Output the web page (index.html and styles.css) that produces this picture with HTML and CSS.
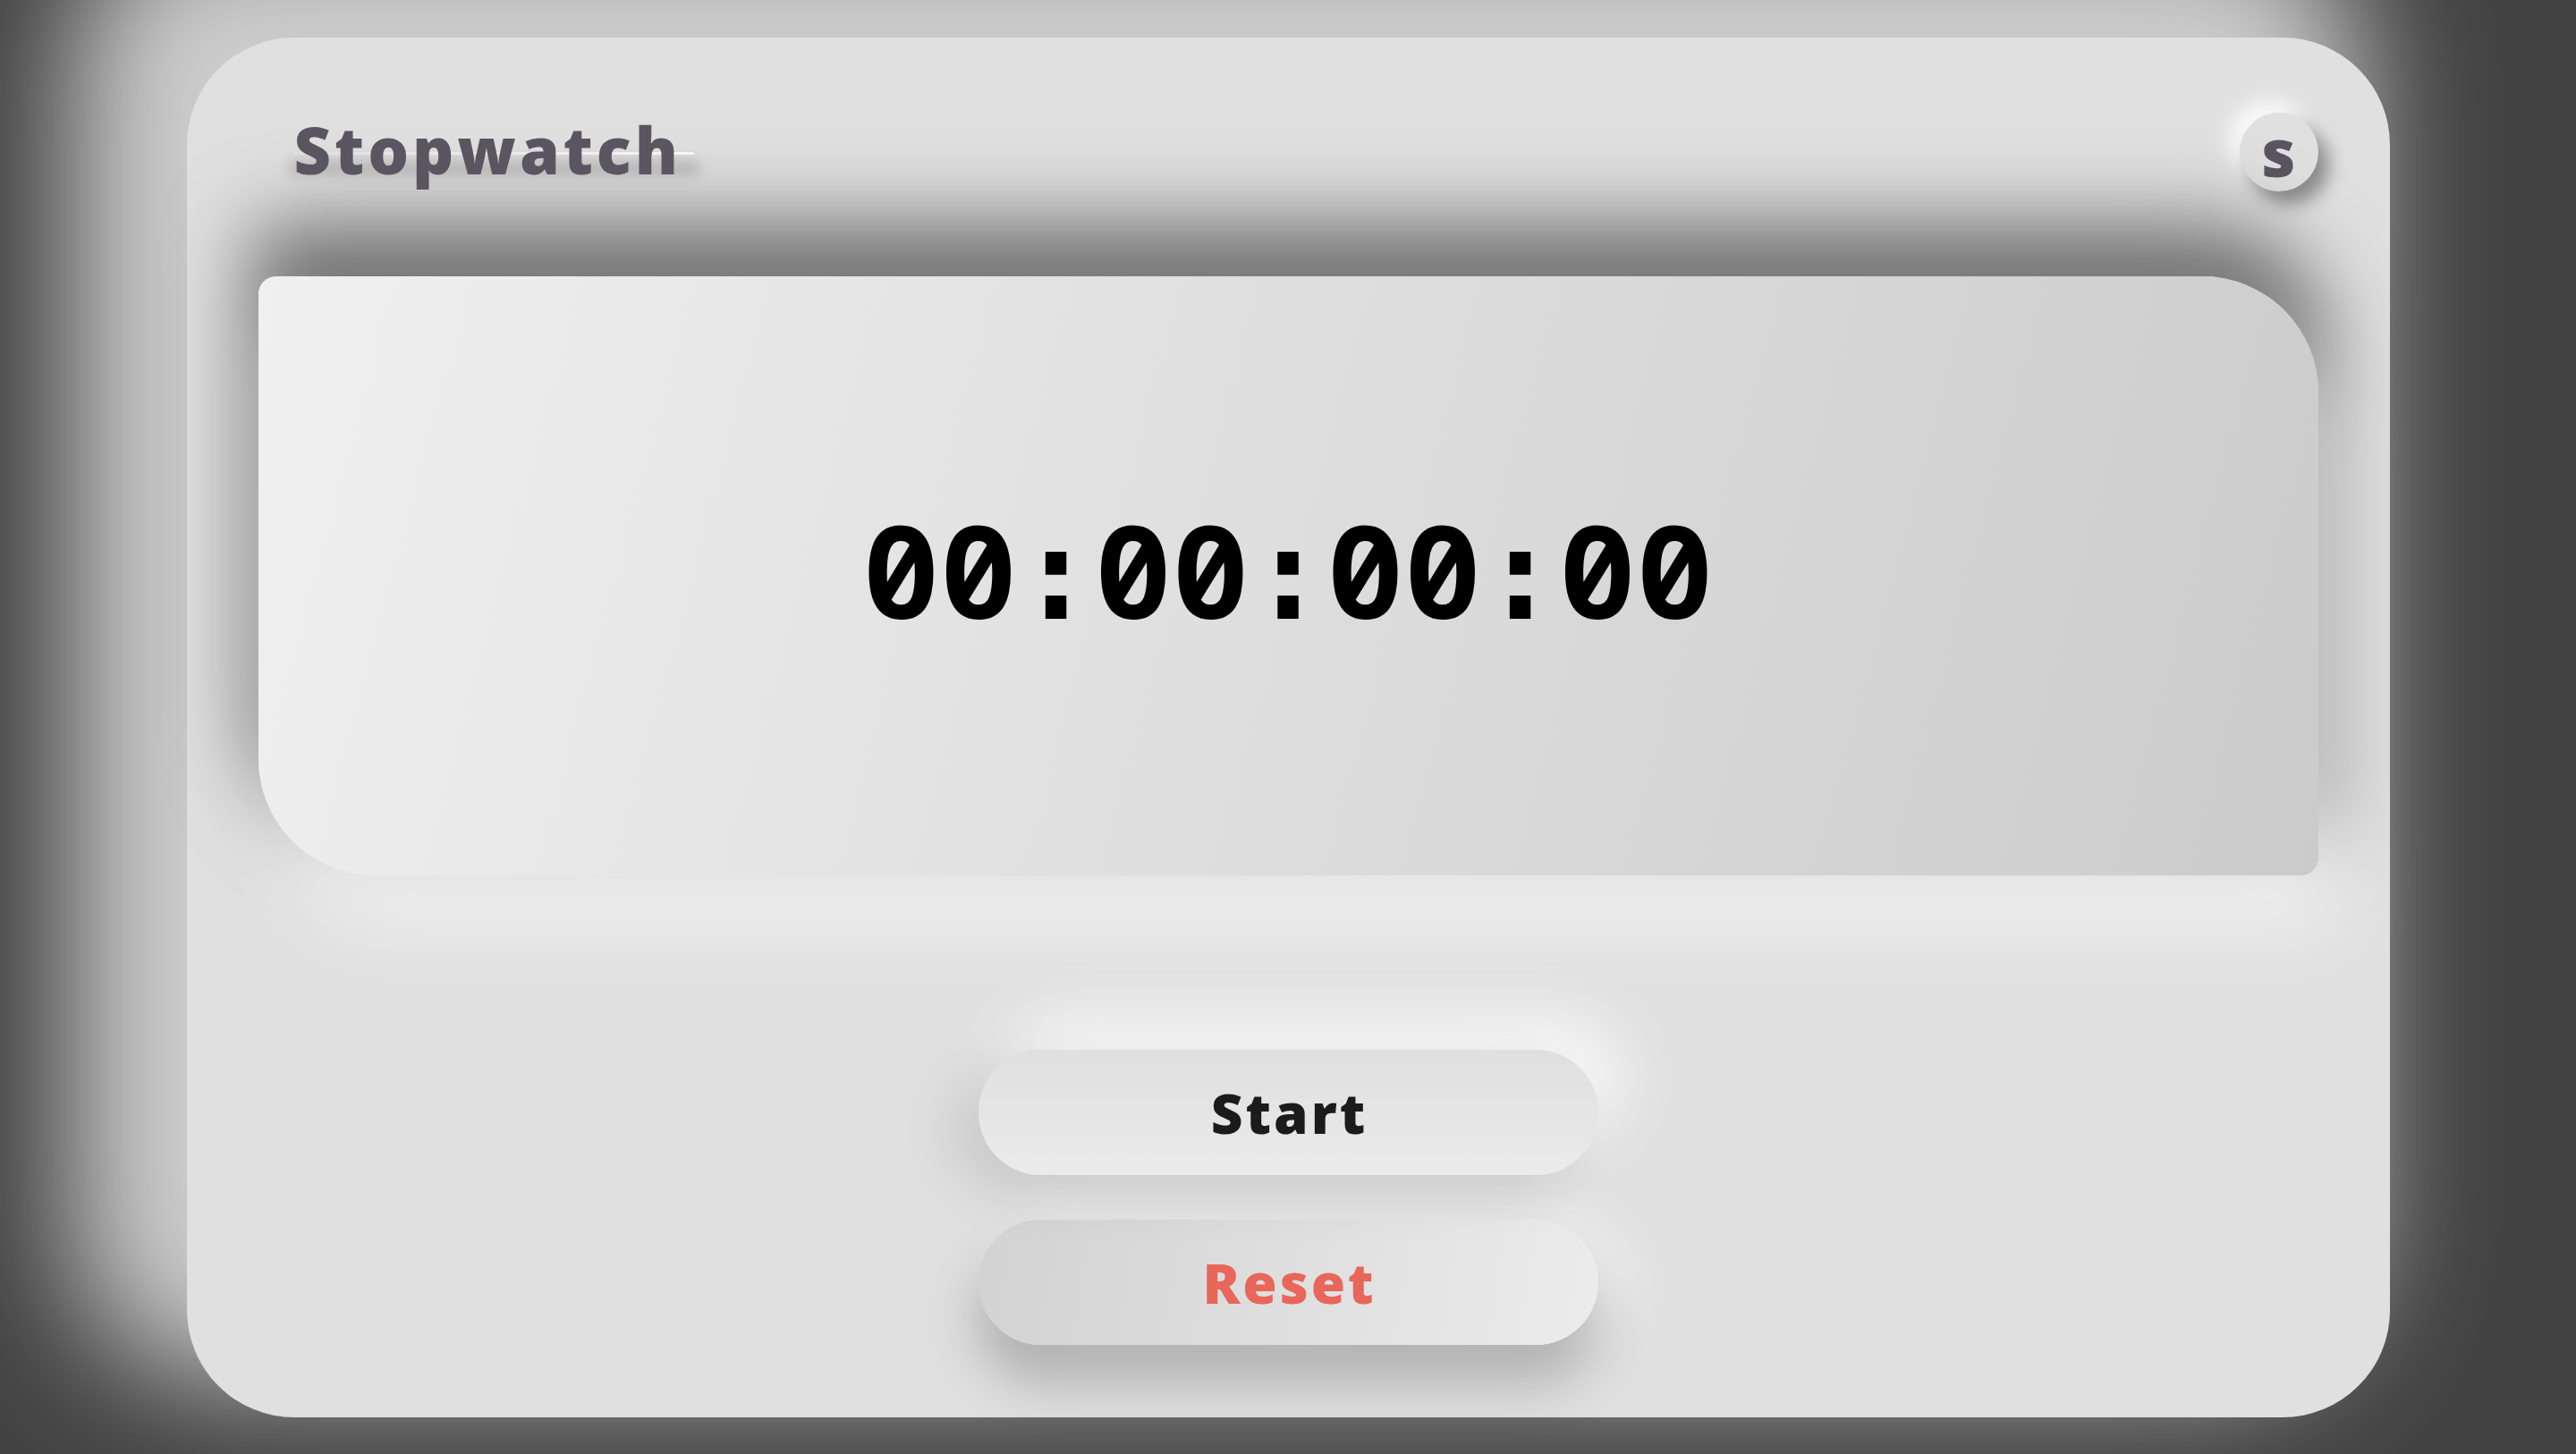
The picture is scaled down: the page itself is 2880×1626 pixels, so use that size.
FILE: index.html
```html
<!DOCTYPE html>
<html lang="en">
<head>
<meta charset="utf-8">
<title>Stopwatch</title>
<link rel="stylesheet" href="styles.css">
</head>
<body>
<main class="card">
  <header class="header">
    <h1 class="title">Stopwatch</h1>
    <button class="avatar" type="button">s</button>
  </header>
  <section class="display">
    <span class="time">00<span class="sep">:</span>00<span class="sep">:</span>00<span class="sep">:</span>00</span>
  </section>
  <div class="controls">
    <button class="btn btn-start" type="button">Start</button>
    <button class="btn btn-reset" type="button">Reset</button>
  </div>
</main>
</body>
</html>
```

FILE: styles.css
```css
* {
  box-sizing: border-box;
}

html,
body {
  margin: 0;
  height: 100%;
}

body {
  background: #444344;
  display: flex;
  align-items: center;
  justify-content: center;
  font-family: "Open Sans", "Lato", sans-serif;
  overflow: hidden;
}

.card {
  width: 2463px;
  height: 1543px;
  background: #e0e0e0;
  border-radius: 120px;
  padding: 84px 80px 0;
  display: flex;
  flex-direction: column;
  box-shadow: -80px -90px 140px 48px #cdcdcd;
}

.header {
  height: 88px;
  display: flex;
  align-items: center;
  justify-content: space-between;
}

.title {
  position: relative;
  z-index: 0;
  margin: 0 0 0 40px;
  padding-bottom: 6px;
  font-size: 72px;
  font-weight: 800;
  line-height: 82px;
  letter-spacing: 4px;
  color: #5a5560;
}

.title::before {
  content: "";
  position: absolute;
  z-index: -1;
  left: 0;
  right: -14px;
  top: 44px;
  height: 3px;
  border-radius: 2px;
  background: linear-gradient(90deg, rgba(255, 255, 255, 0.1), rgba(255, 255, 255, 0.75));
  box-shadow: 0 16px 14px 6px rgba(0, 0, 0, 0.16);
}

.avatar {
  width: 88px;
  height: 88px;
  padding: 0;
  border: none;
  border-radius: 50%;
  background: #e0e0e0;
  color: #5a5560;
  font: 800 74px/1 "Open Sans", sans-serif;
  display: flex;
  align-items: center;
  justify-content: center;
  box-shadow: 12px 14px 20px rgba(0, 0, 0, 0.38), -12px -14px 24px rgba(255, 255, 255, 0.85);
}

.display {
  margin-top: 95px;
  height: 670px;
  padding-bottom: 10px;
  border-radius: 20px 130px 20px 130px;
  background: linear-gradient(105deg, #f0f0f0 0%, #cbcbcb 100%);
  display: flex;
  align-items: center;
  justify-content: center;
  box-shadow: 20px 60px 80px rgba(255, 255, 255, 0.55), 0 -50px 90px 10px rgba(0, 0, 0, 0.5);
}

.time {
  font: 700 144px/1 "Noto Sans Mono", "DejaVu Sans Mono", monospace;
  color: #000;
}

.sep {
  font-family: "DejaVu Sans Mono", monospace;
}

.controls {
  margin-top: 195px;
  display: flex;
  flex-direction: column;
  align-items: center;
  gap: 50px;
}

.btn {
  width: 693px;
  height: 140px;
  padding: 0 0 0 3px;
  border: none;
  border-radius: 70px;
  font: 800 62px/1 "Open Sans", sans-serif;
  letter-spacing: 3px;
}

.btn-start {
  position: relative;
  z-index: 1;
  color: #1b1b1b;
  background: linear-gradient(#dfdfdf, #ebebeb);
  box-shadow: -30px 20px 60px rgba(0, 0, 0, 0.1), 30px -40px 70px rgba(255, 255, 255, 0.7);
}

.btn-reset {
  color: #e8665a;
  background: linear-gradient(100deg, #d2d2d2, #ececec);
  box-shadow: 0 40px 60px rgba(0, 0, 0, 0.24), 30px 0 60px rgba(255, 255, 255, 0.6);
}
```
